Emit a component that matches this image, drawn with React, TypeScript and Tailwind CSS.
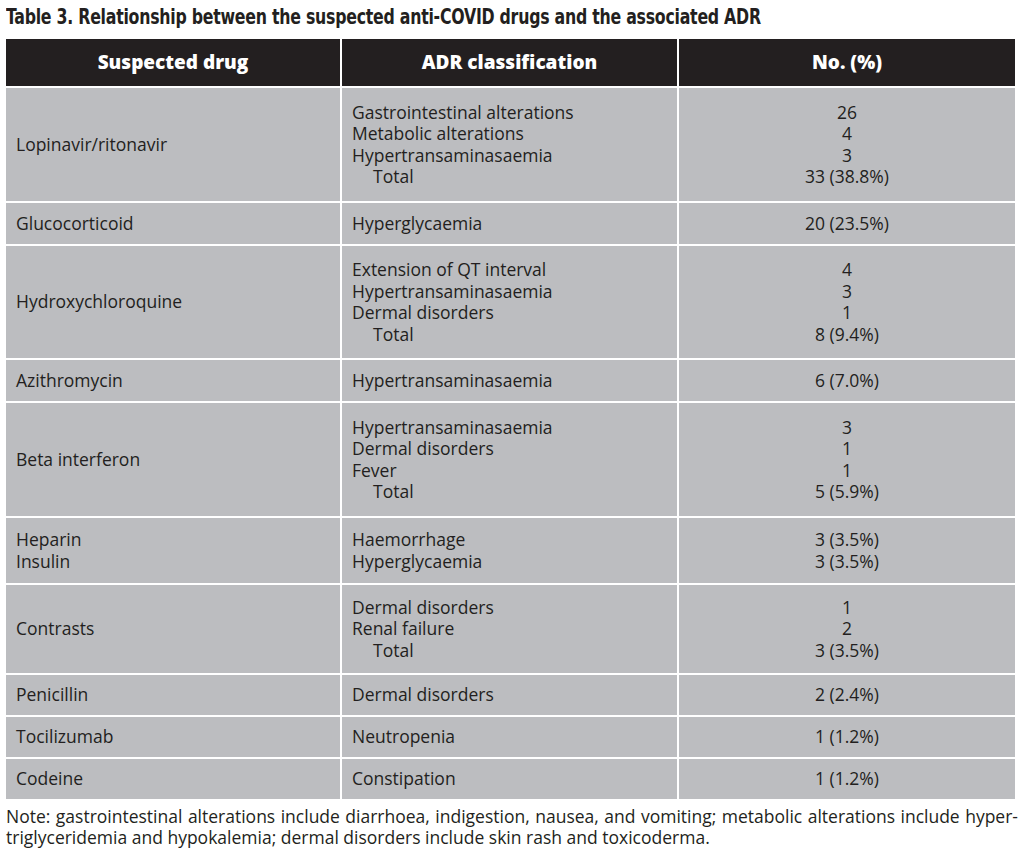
const rows: { drug: string[]; adr: string[]; num: string[]; h: string; total?: boolean }[] = [
  {
    drug: ["Lopinavir/ritonavir"],
    adr: ["Gastrointestinal alterations", "Metabolic alterations", "Hypertransaminasaemia", "Total"],
    num: ["26", "4", "3", "33 (38.8%)"],
    h: "h-[113px]",
    total: true,
  },
  { drug: ["Glucocorticoid"], adr: ["Hyperglycaemia"], num: ["20 (23.5%)"], h: "h-[41px]" },
  {
    drug: ["Hydroxychloroquine"],
    adr: ["Extension of QT interval", "Hypertransaminasaemia", "Dermal disorders", "Total"],
    num: ["4", "3", "1", "8 (9.4%)"],
    h: "h-[112px]",
    total: true,
  },
  { drug: ["Azithromycin"], adr: ["Hypertransaminasaemia"], num: ["6 (7.0%)"], h: "h-[41px]" },
  {
    drug: ["Beta interferon"],
    adr: ["Hypertransaminasaemia", "Dermal disorders", "Fever", "Total"],
    num: ["3", "1", "1", "5 (5.9%)"],
    h: "h-[113px]",
    total: true,
  },
  {
    drug: ["Heparin", "Insulin"],
    adr: ["Haemorrhage", "Hyperglycaemia"],
    num: ["3 (3.5%)", "3 (3.5%)"],
    h: "h-[65px]",
  },
  {
    drug: ["Contrasts"],
    adr: ["Dermal disorders", "Renal failure", "Total"],
    num: ["1", "2", "3 (3.5%)"],
    h: "h-[88px]",
    total: true,
  },
  { drug: ["Penicillin"], adr: ["Dermal disorders"], num: ["2 (2.4%)"], h: "h-[40px]" },
  { drug: ["Tocilizumab"], adr: ["Neutropenia"], num: ["1 (1.2%)"], h: "h-[40px]" },
  { drug: ["Codeine"], adr: ["Constipation"], num: ["1 (1.2%)"], h: "h-[40px]" },
];

export default function App() {
  return (
    <main className="w-[1024px] h-[860px] bg-white text-[#231f20] font-['Open_Sans',sans-serif]">
      <div className="pl-[6px] pt-[3px] h-[39px]">
        <h1 className="w-[904px] origin-left scale-x-[0.835] whitespace-nowrap text-[21px] leading-[28px] font-bold font-['Liberation_Sans_Narrow','DejaVu_Sans_Condensed','DejaVu_Sans',sans-serif] [font-stretch:condensed] tracking-[-0.3px]">
          Table 3. Relationship between the suspected anti-COVID drugs and the associated ADR
        </h1>
      </div>

      <div className="ml-[6px] w-[1009px] grid grid-cols-[334px_335px_336px] gap-[2px]">
        <div className="h-[47px] bg-[#231f20] text-white font-extrabold text-[19px] flex items-center justify-center">Suspected drug</div>
        <div className="h-[47px] bg-[#231f20] text-white font-extrabold text-[19px] flex items-center justify-center">ADR classification</div>
        <div className="h-[47px] bg-[#231f20] text-white font-extrabold text-[19px] flex items-center justify-center">No. (%)</div>

        {rows.map((r, i) => (
          <Row key={i} row={r} />
        ))}
      </div>

      <div className="px-[6px] pt-[7px] text-[17.5px] leading-[21px]">
        <p className="text-justify [text-align-last:justify]">
          Note: gastrointestinal alterations include diarrhoea, indigestion, nausea, and vomiting; metabolic alterations include hyper-
        </p>
        <p>triglyceridemia and hypokalemia; dermal disorders include skin rash and toxicoderma.</p>
      </div>
    </main>
  );
}

function Row({ row }: { row: (typeof rows)[number] }) {
  const cell = `${row.h} bg-[#bcbdc0] flex flex-col justify-center text-[17.5px] leading-[21.5px]`;
  return (
    <>
      <div className={`${cell} pl-[10px]`}>
        {row.drug.map((d) => (
          <span key={d}>{d}</span>
        ))}
      </div>
      <div className={`${cell} pl-[10px]`}>
        {row.adr.map((a, i) => (
          <span key={i} className={row.total && i === row.adr.length - 1 ? "pl-[21px]" : ""}>
            {a}
          </span>
        ))}
      </div>
      <div className={`${cell} items-center`}>
        {row.num.map((n, i) => (
          <span key={i}>{n}</span>
        ))}
      </div>
    </>
  );
}
